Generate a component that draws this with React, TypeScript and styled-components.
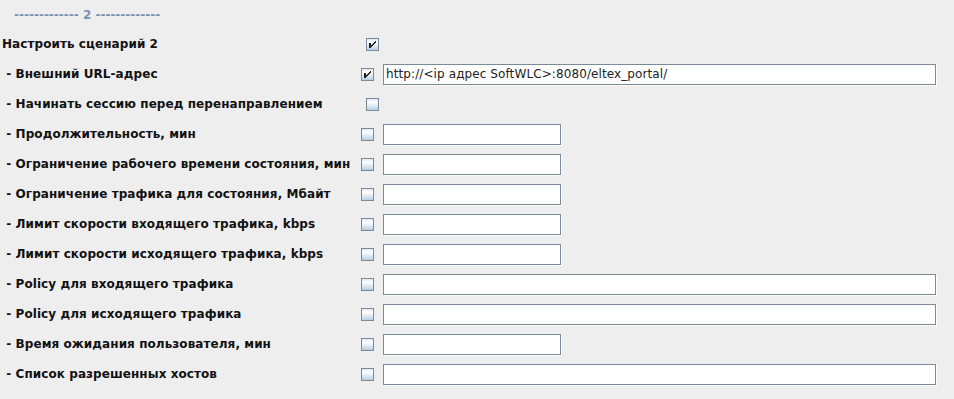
import styled, { createGlobalStyle } from "styled-components";
import React from "react";

type Field = "none" | "short" | "long";

interface RowData {
  label: string;
  checked: boolean;
  field: Field;
  value?: string;
}

const rows: RowData[] = [
  { label: "Настроить сценарий 2", checked: true, field: "none" },
  {
    label: " - Внешний URL-адрес",
    checked: true,
    field: "long",
    value: "http://<ip адрес SoftWLC>:8080/eltex_portal/",
  },
  { label: " - Начинать сессию перед перенаправлением", checked: false, field: "none" },
  { label: " - Продолжительность, мин", checked: false, field: "short" },
  { label: " - Ограничение рабочего времени состояния, мин", checked: false, field: "short" },
  { label: " - Ограничение трафика для состояния, Мбайт", checked: false, field: "short" },
  { label: " - Лимит скорости входящего трафика, kbps", checked: false, field: "short" },
  { label: " - Лимит скорости исходящего трафика, kbps", checked: false, field: "short" },
  { label: " - Policy для входящего трафика", checked: false, field: "long" },
  { label: " - Policy для исходящего трафика", checked: false, field: "long" },
  { label: " - Время ожидания пользователя, мин", checked: false, field: "short" },
  { label: " - Список разрешенных хостов", checked: false, field: "long" },
];

// metal-style check mark, pixel by pixel
const CheckMark = () => (
  <svg width="11" height="11" viewBox="0 0 11 11" shapeRendering="crispEdges">
    <rect x="2" y="4" width="2" height="5" fill="#222" />
    {[0, 1, 2, 3, 4].map((i) => (
      <rect key={i} x={8 - i} y={2 + i} width="1" height="2" fill="#222" />
    ))}
  </svg>
);

const CheckBox = ({ checked }: { checked: boolean }) => (
  <Box>{checked && <CheckMark />}</Box>
);

const App = () => {
  return (
    <>
      <GlobalStyle />
      <Panel>
        <Header>------------- 2 -------------</Header>
        {rows.map((row, i) => (
          <Row key={i}>
            <Label>{row.label}</Label>
            <CheckCell $wide={row.field === "none"}>
              <CheckBox checked={row.checked} />
            </CheckCell>
            {row.field !== "none" && (
              <Input $size={row.field} defaultValue={row.value ?? ""} />
            )}
          </Row>
        ))}
      </Panel>
    </>
  );
};

const GlobalStyle = createGlobalStyle`
  html, body {
    margin: 0;
    padding: 0;
    background: #eeeeee;
  }
  body {
    font-family: "DejaVu Sans", "Liberation Sans", sans-serif;
  }
`;

const Panel = styled.div`
  width: 954px;
  height: 399px;
  background: #eeeeee;
  display: flex;
  flex-direction: column;
`;

const Header = styled.div`
  height: 29px;
  padding-left: 14px;
  display: flex;
  align-items: center;
  font-size: 12px;
  font-weight: bold;
  color: #7b91b0;
  white-space: pre;
`;

const Row = styled.div`
  height: 30px;
  display: flex;
  align-items: center;
`;

const Label = styled.div`
  width: 359px;
  padding-left: 2px;
  box-sizing: border-box;
  font-size: 12px;
  font-weight: bold;
  letter-spacing: 0.07px;
  color: #111;
  white-space: pre;
`;

const CheckCell = styled.div<{ $wide: boolean }>`
  width: 24px;
  display: flex;
  padding-left: ${(p) => (p.$wide ? "7px" : "2px")};
  box-sizing: border-box;
`;

const Box = styled.div`
  width: 13px;
  height: 13px;
  box-sizing: border-box;
  border: 1px solid #7a8a99;
  background: linear-gradient(to bottom, #dde8f3 0%, #ffffff 30%, #b8cfe5 100%);
  display: flex;
`;

const Input = styled.input<{ $size: Field }>`
  width: ${(p) => (p.$size === "short" ? "178px" : "553px")};
  height: 21px;
  box-sizing: border-box;
  margin: 0;
  padding: 0 2px;
  border: 1px solid #7a8a99;
  box-shadow: 1px 1px 0 #ffffff;
  background: #ffffff;
  font-family: "DejaVu Sans", sans-serif;
  font-size: 12px;
  letter-spacing: 0.1px;
  color: #222;
  outline: none;
`;

export default App;
